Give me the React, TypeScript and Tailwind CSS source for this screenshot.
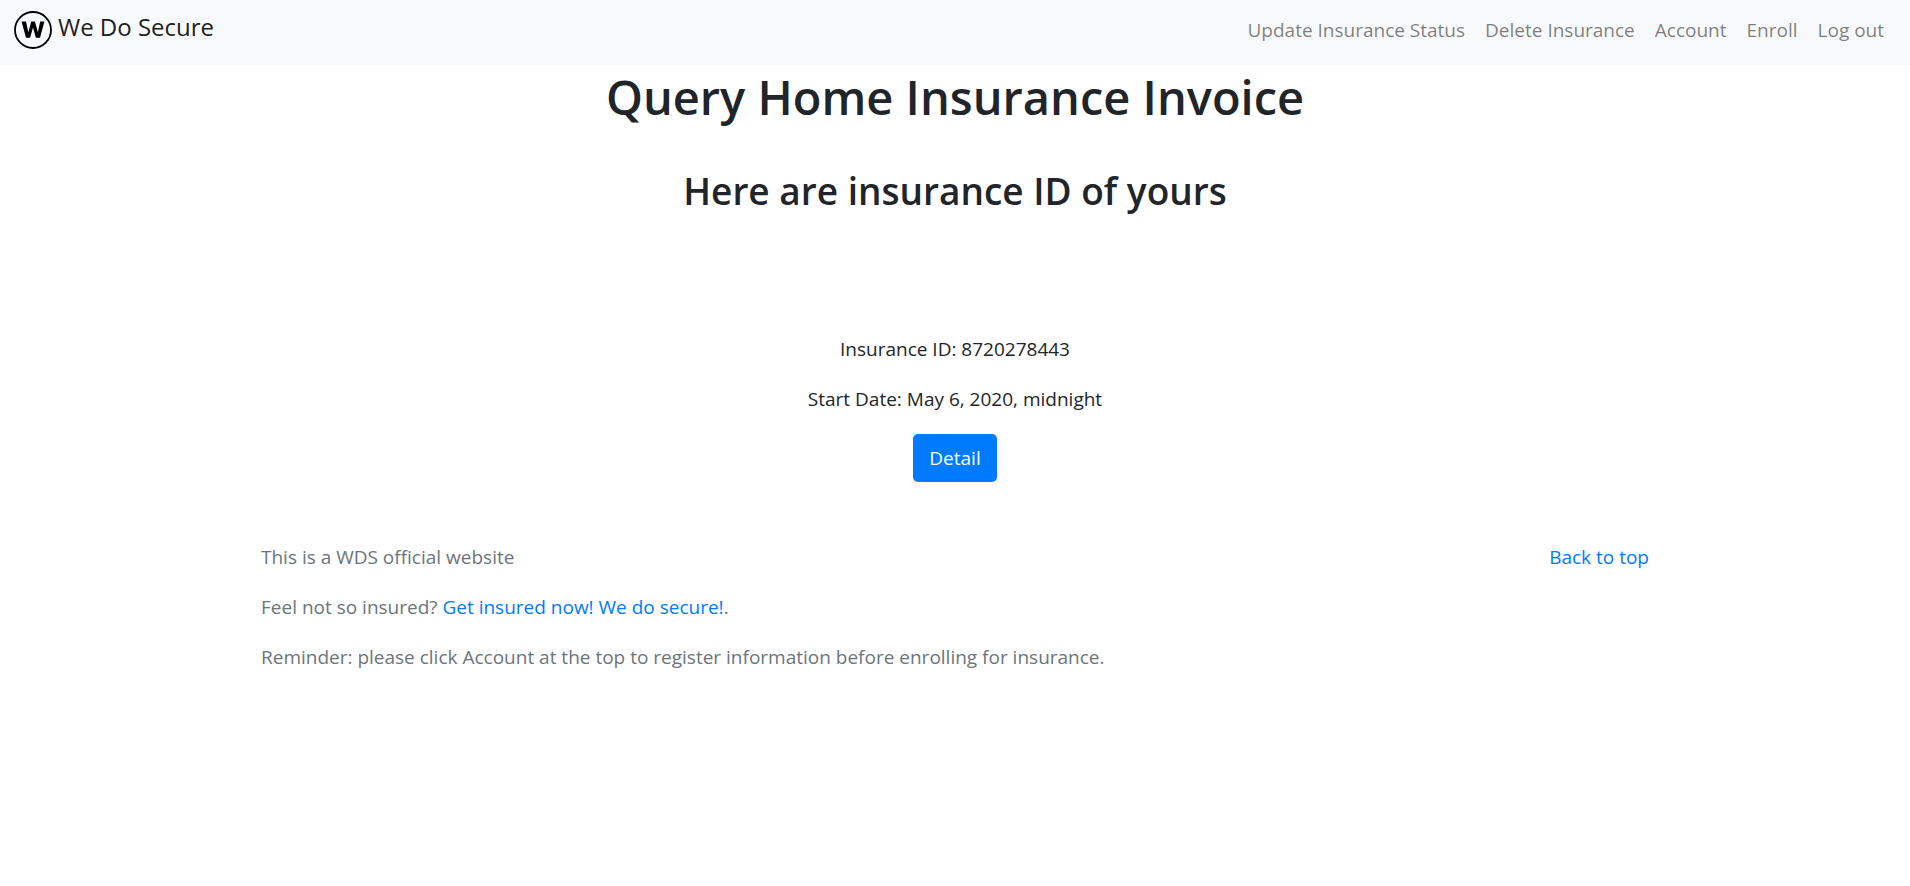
const navLinks = ["Update Insurance Status", "Delete Insurance", "Account", "Enroll", "Log out"];

function Logo() {
  return (
    <svg viewBox="0 0 38 38" className="size-[38px] shrink-0" aria-hidden="true">
      <circle cx="19" cy="19" r="18" fill="none" stroke="#000" strokeWidth="1.8" />
      <path
        d="M7.6 10.4H12l2.3 10.8 3-10.8h3.6l3 10.8 2.3-10.8h4.2l-4.4 16.4h-4.1L19 16.6l-2.9 10.2H12z"
        fill="#000"
      />
    </svg>
  );
}

function Navbar() {
  return (
    <nav className="flex h-[65px] items-center justify-between bg-[#f8f9fa] px-3.5 pb-1.5">
      <a href="#" className="flex items-center gap-1.5 text-2xl leading-9 text-black/90">
        <Logo />
        <span className="pb-1.5">We Do Secure</span>
      </a>
      <ul className="flex pr-0.5 leading-[30px] text-black/50">
        {navLinks.map((label) => (
          <li key={label}>
            <a href="#" className="block px-2.5">
              {label}
            </a>
          </li>
        ))}
      </ul>
    </nav>
  );
}

export default function App() {
  return (
    <div className="bg-white font-['Open_Sans',sans-serif] text-[19px] leading-[30px] text-[#212529]">
      <Navbar />
      <main className="pt-0.5 text-center">
        <h1 className="text-[47px] font-semibold leading-[60px]">Query Home Insurance Invoice</h1>
        <h2 className="mt-10 text-[37px] font-semibold leading-[48px]">Here are insurance ID of yours</h2>
        <div className="mt-[119px] flex flex-col items-center gap-5">
          <p>Insurance ID: 8720278443</p>
          <p>Start Date: May 6, 2020, midnight</p>
          <button type="button" className="rounded-[5px] bg-[#007bff] px-4 py-[9px] text-white">
            Detail
          </button>
        </div>
      </main>
      <footer className="mx-auto mt-[60px] flex max-w-[1426px] items-start justify-between px-[19px] text-[#6c757d]">
        <div className="flex flex-col gap-5">
          <p>This is a WDS official website</p>
          <p>
            Feel not so insured?{" "}
            <a href="#" className="text-[#007bff]">
              Get insured now! We do secure!
            </a>
            .
          </p>
          <p>Reminder: please click Account at the top to register information before enrolling for insurance.</p>
        </div>
        <a href="#" className="text-[#007bff]">
          Back to top
        </a>
      </footer>
    </div>
  );
}
